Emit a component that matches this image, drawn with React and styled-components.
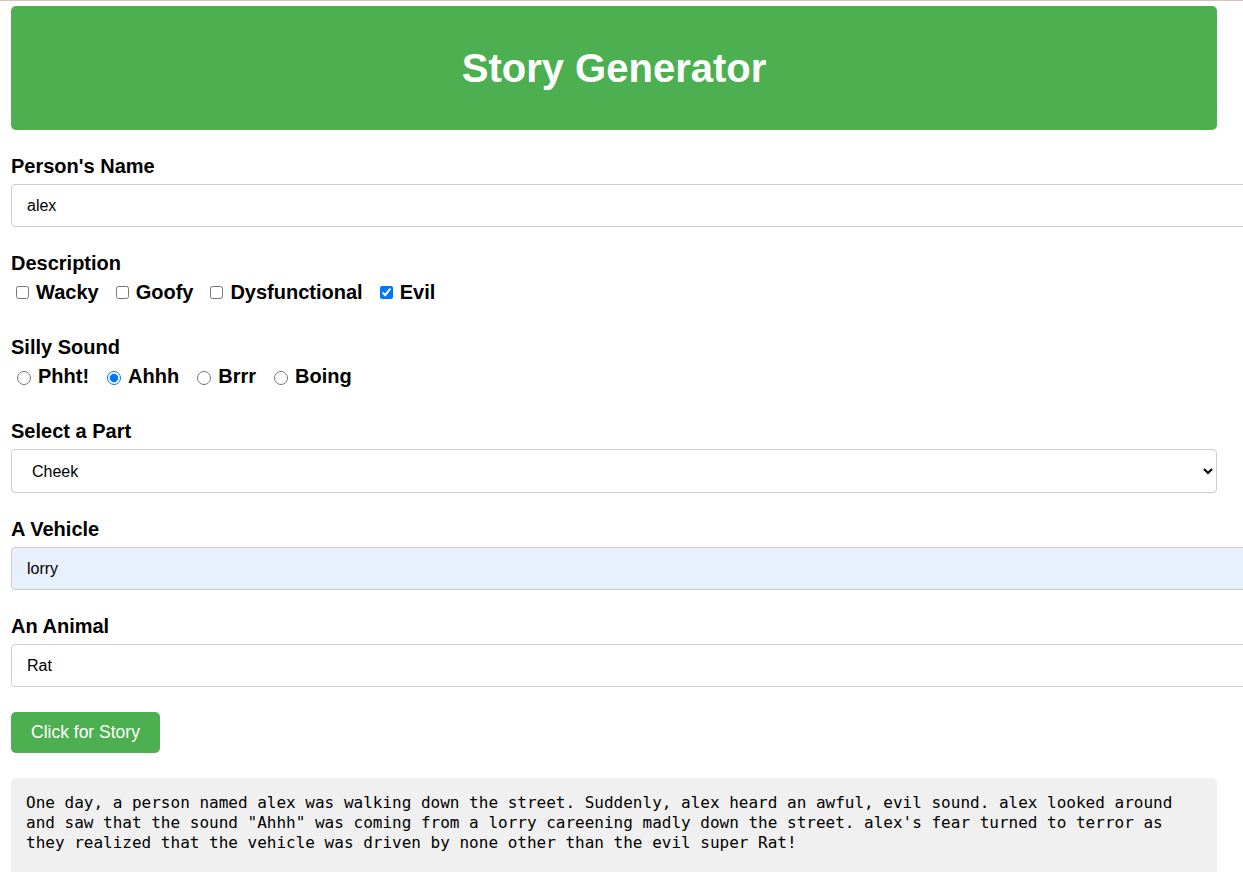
import React, { useState } from 'react'
import styled, { createGlobalStyle } from 'styled-components'

const GlobalStyle = createGlobalStyle`
  html, body {
    margin: 0;
    padding: 0;
    overflow: hidden;
    background: #fff;
  }
  body {
    font-family: "Liberation Sans", Arial, sans-serif;
    color: #000;
    border-top: 1px solid #dcc2bd;
  }
`

const Page = styled.div`
  width: 1206px;
  margin: 5px 0 0 11px;
`

const Header = styled.header`
  background: #4caf50;
  border-radius: 5px;
  padding: 39px 0;
  text-align: center;
`

const Title = styled.h1`
  margin: 0;
  color: #fff;
  font-size: 40px;
  line-height: 46px;
  font-weight: bold;
`

const Group = styled.div`
  margin-top: 24px;
`

const FieldLabel = styled.label`
  display: block;
  font-size: 20px;
  line-height: 24px;
  font-weight: bold;
  margin-bottom: 6px;
`

const TextInput = styled.input`
  display: block;
  width: 100%;
  padding: 12px 15px;
  font-family: inherit;
  font-size: 16px;
  line-height: 17px;
  color: #000;
  background: ${p => (p.$filled ? '#e8f0fe' : '#fff')};
  border: 1px solid #ccc;
  border-radius: 4px;
  outline: none;
`

const Select = styled.select`
  display: block;
  width: 100%;
  height: 44px;
  padding: 0 12px 0 16px;
  font-family: inherit;
  font-size: 16px;
  color: #000;
  background: #fff;
  border: 1px solid #ccc;
  border-radius: 4px;
  outline: none;
`

const OptionRow = styled.div`
  display: flex;
  align-items: center;
  padding-bottom: 7px;
`

const Option = styled.label`
  display: inline-flex;
  align-items: center;
  margin-right: 12px;
  font-size: 20px;
  line-height: 23px;
  font-weight: bold;
`

const Choice = styled.input`
  width: ${p => (p.type === 'radio' ? '14px' : '13px')};
  height: ${p => (p.type === 'radio' ? '14px' : '13px')};
  margin: ${p => (p.type === 'radio' ? '2px 7px 0 6px' : '0 7px 0 5px')};
`

const StoryButton = styled.button`
  display: block;
  margin-top: 25px;
  padding: 10px 20px;
  font-family: inherit;
  font-size: 17.5px;
  line-height: 21px;
  color: #fff;
  background: #4caf50;
  border: none;
  border-radius: 5px;
  cursor: pointer;
`

const Story = styled.pre`
  margin: 25px 0 0;
  padding: 15px 15px 30px;
  background: #f0f0f0;
  border-radius: 5px;
  font-family: "DejaVu Sans Mono", "Liberation Mono", monospace;
  font-size: 16px;
  line-height: 20px;
  white-space: pre-wrap;
  color: #000;
`

const traits = ['Wacky', 'Goofy', 'Dysfunctional', 'Evil']
const sounds = ['Phht!', 'Ahhh', 'Brrr', 'Boing']
const parts = ['Cheek', 'Nose', 'Elbow', 'Knee', 'Toe']

const makeStory = ({ name, picked, sound, vehicle, animal }) => {
  const mood = picked.length ? picked.join(', ').toLowerCase() : 'strange'
  return `One day, a person named ${name} was walking down the street. Suddenly, ${name} heard an awful, ${mood} sound. ${name} looked around and saw that the sound "${sound}" was coming from a ${vehicle} careening madly down the street. ${name}'s fear turned to terror as they realized that the vehicle was driven by none other than the ${mood} super ${animal}!`
}

const App = () => {
  const [name, setName] = useState('alex')
  const [picked, setPicked] = useState(['Evil'])
  const [sound, setSound] = useState('Ahhh')
  const [part, setPart] = useState('Cheek')
  const [vehicle, setVehicle] = useState('lorry')
  const [animal, setAnimal] = useState('Rat')
  const [story, setStory] = useState(() =>
    makeStory({ name: 'alex', picked: ['Evil'], sound: 'Ahhh', vehicle: 'lorry', animal: 'Rat' })
  )

  const toggleTrait = (t) => {
    setPicked(prev => (prev.includes(t) ? prev.filter(x => x !== t) : [...prev, t]))
  }

  return (
    <>
      <GlobalStyle />
      <Page>
        <Header>
          <Title>Story Generator</Title>
        </Header>

        <Group>
          <FieldLabel htmlFor="name">Person's Name</FieldLabel>
          <TextInput id="name" value={name} onChange={e => setName(e.target.value)} />
        </Group>

        <Group>
          <FieldLabel>Description</FieldLabel>
          <OptionRow>
            {traits.map(t => (
              <Option key={t}>
                <Choice type="checkbox" checked={picked.includes(t)} onChange={() => toggleTrait(t)} />
                {t}
              </Option>
            ))}
          </OptionRow>
        </Group>

        <Group>
          <FieldLabel>Silly Sound</FieldLabel>
          <OptionRow>
            {sounds.map(s => (
              <Option key={s}>
                <Choice type="radio" name="sound" checked={sound === s} onChange={() => setSound(s)} />
                {s}
              </Option>
            ))}
          </OptionRow>
        </Group>

        <Group>
          <FieldLabel htmlFor="part">Select a Part</FieldLabel>
          <Select id="part" value={part} onChange={e => setPart(e.target.value)}>
            {parts.map(p => <option key={p}>{p}</option>)}
          </Select>
        </Group>

        <Group>
          <FieldLabel htmlFor="vehicle">A Vehicle</FieldLabel>
          <TextInput id="vehicle" $filled value={vehicle} onChange={e => setVehicle(e.target.value)} />
        </Group>

        <Group>
          <FieldLabel htmlFor="animal">An Animal</FieldLabel>
          <TextInput id="animal" value={animal} onChange={e => setAnimal(e.target.value)} />
        </Group>

        <StoryButton onClick={() => setStory(makeStory({ name, picked, sound, vehicle, animal }))}>
          Click for Story
        </StoryButton>

        <Story>{story}</Story>
      </Page>
    </>
  )
}

export default App
